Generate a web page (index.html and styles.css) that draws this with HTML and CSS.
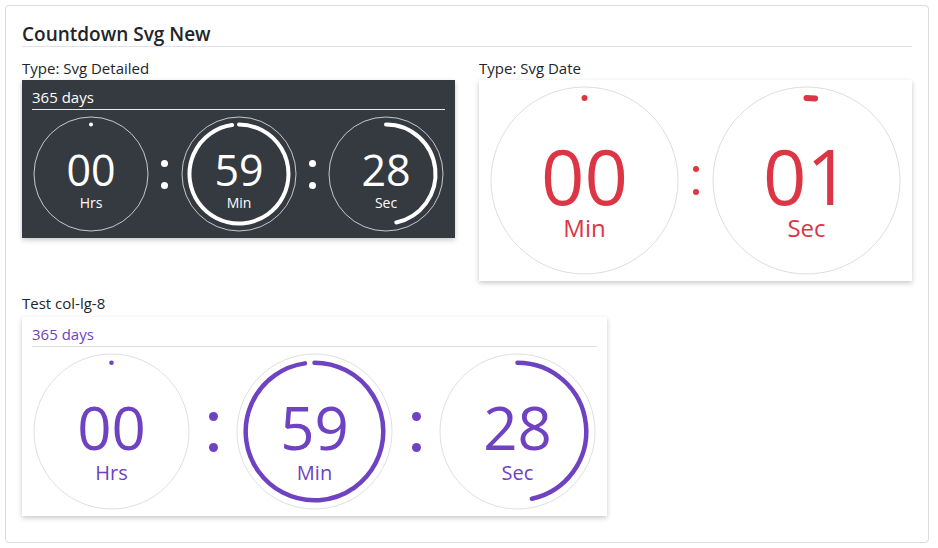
FILE: index.html
```html
<!DOCTYPE html>
<html lang="en">
<head>
<meta charset="utf-8">
<title>Countdown Svg New</title>
<link rel="stylesheet" href="styles.css">
</head>
<body>
<div class="page">
  <div class="panel">
    <h5 class="panel-title">Countdown Svg New</h5>
    <div class="row">
      <div class="col col-6">
        <div class="label">Type: Svg Detailed</div>
        <div class="cd cd-dark">
          <div class="cd-head">365 days</div>
          <div class="cd-units">
            <svg class="unit" width="118" height="118" viewBox="0 0 118 118">
              <circle class="track" cx="59" cy="59" r="57"/>
              <circle class="dot" cx="59" cy="9.5" r="2"/>
              <text class="num" x="59" y="71">00</text>
              <text class="lbl" x="59" y="93">Hrs</text>
            </svg>
            <div class="colon"><span></span><span></span></div>
            <svg class="unit" width="118" height="118" viewBox="0 0 118 118">
              <circle class="track" cx="59" cy="59" r="57"/>
              <path class="arc" d="M59 9.5 A49.5 49.5 0 1 1 52.11 9.98"/>
              <text class="num" x="59" y="71">59</text>
              <text class="lbl" x="59" y="93">Min</text>
            </svg>
            <div class="colon"><span></span><span></span></div>
            <svg class="unit" width="118" height="118" viewBox="0 0 118 118">
              <circle class="track" cx="59" cy="59" r="57"/>
              <path class="arc" d="M59 9.5 A49.5 49.5 0 0 1 69.29 107.42"/>
              <text class="num" x="59" y="71">28</text>
              <text class="lbl" x="59" y="93">Sec</text>
            </svg>
          </div>
        </div>
      </div>
      <div class="col col-6">
        <div class="label">Type: Svg Date</div>
        <div class="cd cd-red">
          <div class="cd-units">
            <svg class="unit" width="191" height="191" viewBox="0 0 191 191">
              <circle class="track" cx="95.5" cy="95.5" r="93.5"/>
              <circle class="dot" cx="95.5" cy="13.1" r="3"/>
              <text class="num" x="95.5" y="119.5">00</text>
              <text class="lbl" x="95.5" y="152">Min</text>
            </svg>
            <div class="colon"><span></span><span></span></div>
            <svg class="unit" width="191" height="191" viewBox="0 0 191 191">
              <circle class="track" cx="95.5" cy="95.5" r="93.5"/>
              <path class="arc" d="M95.5 13.1 A82.4 82.4 0 0 1 104.11 13.55"/>
              <text class="num" x="95.5" y="119.5">01</text>
              <text class="lbl" x="95.5" y="152">Sec</text>
            </svg>
          </div>
        </div>
      </div>
      <div class="col col-8">
        <div class="label label-gap">Test col-lg-8</div>
        <div class="cd cd-purple">
          <div class="cd-head">365 days</div>
          <div class="cd-units">
            <svg class="unit" width="159" height="159" viewBox="0 0 159 159">
              <circle class="track" cx="79.5" cy="79.5" r="77.5"/>
              <circle class="dot" cx="79.5" cy="10.7" r="2.3"/>
              <text class="num" x="79.5" y="98">00</text>
              <text class="lbl" x="79.5" y="127.5">Hrs</text>
            </svg>
            <div class="colon"><span></span><span></span></div>
            <svg class="unit" width="159" height="159" viewBox="0 0 159 159">
              <circle class="track" cx="79.5" cy="79.5" r="77.5"/>
              <path class="arc" d="M79.5 10.7 A68.8 68.8 0 1 1 69.92 11.37"/>
              <text class="num" x="79.5" y="98">59</text>
              <text class="lbl" x="79.5" y="127.5">Min</text>
            </svg>
            <div class="colon"><span></span><span></span></div>
            <svg class="unit" width="159" height="159" viewBox="0 0 159 159">
              <circle class="track" cx="79.5" cy="79.5" r="77.5"/>
              <path class="arc" d="M79.5 10.7 A68.8 68.8 0 0 1 93.8 146.79"/>
              <text class="num" x="79.5" y="98">28</text>
              <text class="lbl" x="79.5" y="127.5">Sec</text>
            </svg>
          </div>
        </div>
      </div>
    </div>
  </div>
</div>
</body>
</html>
```
FILE: styles.css
```css
* { box-sizing: border-box; }

body {
  margin: 0;
  background: #fff;
  color: #212529;
  font-family: "Open Sans", "Noto Sans", "Liberation Sans", sans-serif;
  font-size: 15px;
  line-height: 24px;
}

.page { padding: 5px; width: 934px; }

.panel {
  border: 1px solid #dcdcdc;
  border-radius: 4px;
  padding: 16px 16px 16px;
}

.panel-title {
  margin: 0 0 9px;
  padding-top: 1px;
  font-size: 19px;
  line-height: 23px;
  font-weight: 600;
  color: #212529;
  border-bottom: 1px solid #dee2e6;
}

.row {
  display: flex;
  flex-wrap: wrap;
  margin: 0 -12px;
}

.col { padding: 0 12px; margin-bottom: 10px; }
.col-6 { width: 50%; }
.col-8 { width: 66.6667%; }

.label { color: #212529; }
.label-gap { margin-bottom: 2px; }

.cd {
  padding: 5px 10px;
  box-shadow: 0 2px 5px rgba(0, 0, 0, 0.22);
  background: #fff;
}

.cd-head {
  border-bottom: 1px solid currentColor;
  margin-bottom: 5px;
}

.cd-units {
  display: flex;
  justify-content: space-between;
  align-items: center;
}

.unit { display: block; flex: none; }

.track { fill: none; stroke-width: 1; }
.arc { fill: none; stroke-linecap: round; }

.num, .lbl {
  text-anchor: middle;
  font-family: "Open Sans", "Noto Sans", sans-serif;
}

.colon {
  display: flex;
  flex-direction: column;
  align-items: center;
}
.colon span { display: block; border-radius: 50%; }

/* dark */
.cd-dark { background: #343a40; color: #fff; }
.cd-dark .cd-head { color: #fff; border-bottom-color: #e9e9e9; }
.cd-dark .track { stroke: rgba(255, 255, 255, 0.72); }
.cd-dark .arc { stroke: #fff; stroke-width: 4; }
.cd-dark .dot { fill: #fff; }
.cd-dark .num { fill: #fff; font-size: 43px; }
.cd-dark .lbl { fill: #fff; font-size: 14px; }
.cd-dark .colon { gap: 15px; }
.cd-dark .colon span { width: 7px; height: 7px; background: #fff; }

/* red */
.cd-red .track { stroke: #dedede; }
.cd-red .arc { stroke: #dc3545; stroke-width: 6; }
.cd-red .dot { fill: #dc3545; }
.cd-red .num { fill: #dc3545; font-size: 76px; }
.cd-red .lbl { fill: #dc3545; font-size: 24px; }
.cd-red .colon { gap: 17px; }
.cd-red .colon span { width: 6px; height: 6px; background: #dc3545; }

/* purple */
.cd-purple .cd-head { color: #6f42c1; border-bottom-color: #dcdcdc; }
.cd-purple .track { stroke: #e0e0e0; }
.cd-purple .arc { stroke: #6f42c1; stroke-width: 4.5; }
.cd-purple .dot { fill: #6f42c1; }
.cd-purple .num { fill: #6f42c1; font-size: 60px; }
.cd-purple .lbl { fill: #6f42c1; font-size: 20px; }
.cd-purple .colon { gap: 22px; }
.cd-purple .colon span { width: 9px; height: 9px; background: #6f42c1; }
```
